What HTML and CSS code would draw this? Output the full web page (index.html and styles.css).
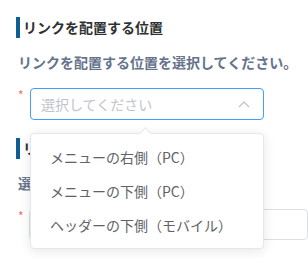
FILE: index.html
```html
<!DOCTYPE html>
<html lang="ja">
<head>
  <meta charset="UTF-8">
  <meta name="viewport" content="width=device-width, initial-scale=1.0">
  <title>リンク設定</title>
  <link rel="stylesheet" href="styles.css">
</head>
<body>
<div class="page">
  <div class="section">
    <h2 class="title">リンクを配置する位置</h2>
    <p class="desc">リンクを配置する位置を選択してください。</p>
    <div class="row">
      <span class="req">*</span>
      <div class="select focus">
        <span class="placeholder">選択してください</span>
        <svg class="arrow" width="12" height="8" viewBox="0 0 12 8">
          <path d="M1 7 L6 2 L11 7" fill="none" stroke="#c0c4cc" stroke-width="1.3"/>
        </svg>
      </div>
    </div>
  </div>

  <div class="section">
    <h2 class="title">リンクの表示方法</h2>
    <p class="desc">選択してください。</p>
    <div class="row">
      <span class="req">*</span>
      <div class="select wide"></div>
    </div>
  </div>

  <div class="dropdown">
    <div class="pointer"></div>
    <ul>
      <li>メニューの右側（PC）</li>
      <li>メニューの下側（PC）</li>
      <li>ヘッダーの下側（モバイル）</li>
    </ul>
  </div>
</div>
</body>
</html>
```

FILE: styles.css
```css
* {
    margin: 0;
    padding: 0;
    box-sizing: border-box;
}

body {
    font-family: "Noto Sans CJK JP", "Noto Sans", sans-serif;
    background: #fff;
    overflow: hidden;
}

.page {
    position: relative;
    padding: 17px 0 0 16px;
}

.section {
    margin-bottom: 18px;
}

.title {
    font-size: 14px;
    font-weight: bold;
    line-height: 21px;
    color: #303133;
    border-left: 4px solid #0b5f92;
    padding-left: 3px;
}

.desc {
    margin-top: 14px;
    font-size: 14px;
    font-weight: bold;
    line-height: 21px;
    color: #65738c;
    padding-left: 2px;
    white-space: nowrap;
}

.row {
    display: flex;
    align-items: flex-start;
    margin-top: 15px;
}

.req {
    width: 14px;
    color: #f56c6c;
    font-size: 12px;
    line-height: 12px;
    padding-left: 2px;
    padding-top: 1px;
}

.select {
    width: 234px;
    height: 32px;
    border: 1px solid #dcdfe6;
    border-radius: 4px;
    display: flex;
    align-items: center;
    justify-content: space-between;
    padding: 0 13px 0 10px;
}

.select.focus {
    border-color: #409eff;
}

.select.wide {
    width: 300px;
    height: 31px;
}

.placeholder {
    font-size: 14px;
    color: #c0c4cc;
}

.dropdown {
    position: absolute;
    left: 30px;
    top: 133px;
    width: 234px;
    background: #fff;
    border: 1px solid #e4e7ed;
    border-radius: 4px;
    box-shadow: 0 2px 12px rgba(0, 0, 0, 0.1);
}

.pointer {
    position: absolute;
    left: 110px;
    top: -5px;
    width: 9px;
    height: 9px;
    background: #fff;
    border-left: 1px solid #e4e7ed;
    border-top: 1px solid #e4e7ed;
    transform: rotate(45deg);
}

ul {
    list-style: none;
    padding: 6px 0;
}

li {
    font-size: 14px;
    color: #606266;
    height: 34px;
    line-height: 34px;
    padding-left: 19px;
}
```
